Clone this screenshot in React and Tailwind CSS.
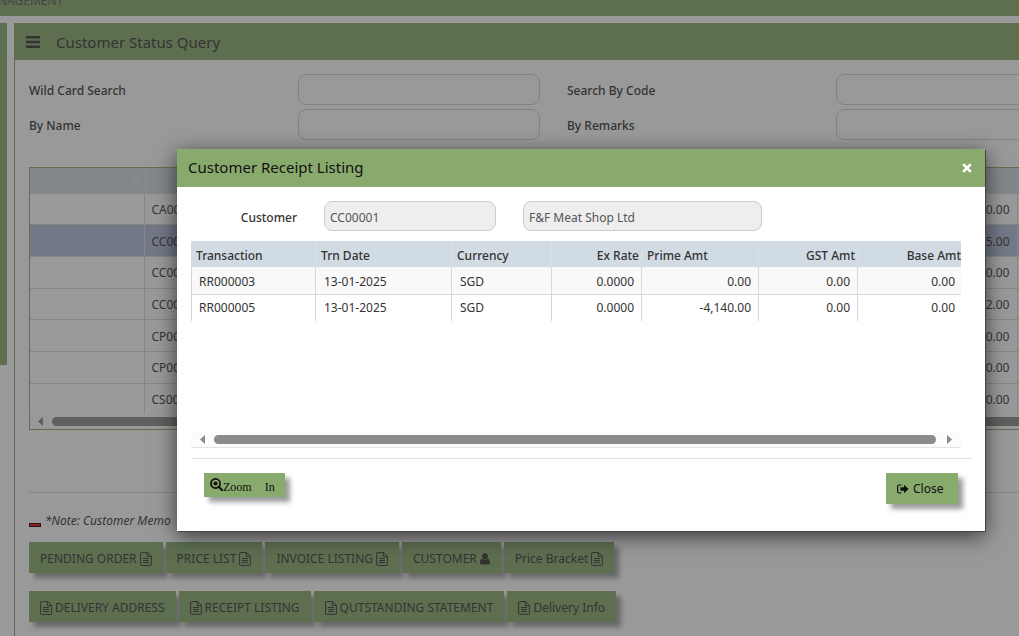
const customers = [
  ["CA00001", "0.00"],
  ["CC00001", "895.00"],
  ["CC00002", "80.00"],
  ["CC00003", "12.00"],
  ["CP00001", "30.00"],
  ["CP00002", "30.00"],
  ["CS00001", "30.00"],
];

const receiptColumns = [
  { title: "Transaction", head: "pl-[5px] text-left", cell: "pl-[7px] text-left" },
  { title: "Trn Date", head: "pl-[5px] text-left", cell: "pl-2 text-left" },
  { title: "Currency", head: "pl-[5px] text-left", cell: "pl-2 text-left" },
  { title: "Ex Rate", head: "pr-[2px] text-right", cell: "pr-[7px] text-right" },
  { title: "Prime Amt", head: "pl-[5px] text-left", cell: "pr-[7px] text-right" },
  { title: "GST Amt", head: "pr-[2px] text-right", cell: "pr-[7px] text-right" },
  { title: "Base Amt", head: "text-right", cell: "pr-[6px] text-right" },
];

const receipts = [
  ["RR000003", "13-01-2025", "SGD", "0.0000", "0.00", "0.00", "0.00"],
  ["RR000005", "13-01-2025", "SGD", "0.0000", "-4,140.00", "0.00", "0.00"],
];

const searchFields = [
  ["wild", "Wild Card Search"],
  ["code", "Search By Code"],
  ["name", "By Name"],
  ["remarks", "By Remarks"],
];

function MenuIcon() {
  return (
    <svg viewBox="0 0 14 12" className="h-3 w-[14px]" fill="currentColor">
      <path d="M0 0h14v2.500H0zM0 4.750h14v2.500H0zM0 9.500h14V12H0z" />
    </svg>
  );
}

function FileIcon() {
  return (
    <svg viewBox="0 0 12 14" className="h-[14px] w-3 shrink-0" fill="none" stroke="currentColor">
      <path d="M1.2.6h6.5l3.7 3.7v8.5q0 .6-.6.6H1.2q-.6 0-.6-.6V1.200q0-.6.6-.6zM7.400.6v4h4M3 6.500h6M3 8.500h6M3 10.500h6" />
    </svg>
  );
}

function UserIcon() {
  return (
    <svg viewBox="0 0 10 12" className="h-3 w-[10px] shrink-0" fill="currentColor">
      <circle cx="5" cy="3.200" r="2.900" />
      <path d="M2.200 5.400C.6 5.800 0 7.600 0 9.400 0 10.900.8 11.600 2 11.600h6c1.200 0 2-.7 2-2.200 0-1.800-.6-3.600-2.200-4C7 6.300 6 6.600 5 6.600s-2-.3-2.800-1.200z" />
    </svg>
  );
}

function SignOutIcon() {
  return (
    <svg viewBox="0 0 12 10" className="h-[10px] w-3 shrink-0">
      <path d="M4.500 1H2.200Q.6 1 .6 2.500v5Q.6 9 2.200 9h2.300" fill="none" stroke="currentColor" strokeWidth="1.200" />
      <path d="M3.500 3.200H7V.8L11.600 5 7 9.200V6.800H3.500z" fill="currentColor" />
    </svg>
  );
}

function ZoomIcon() {
  return (
    <svg viewBox="0 0 13 13" className="size-[13px] shrink-0">
      <circle cx="5.500" cy="5.500" r="4.600" fill="none" stroke="currentColor" strokeWidth="1.700" />
      <circle cx="5.500" cy="5.500" r="2.100" fill="currentColor" />
      <path d="M8.800 8.800l3.400 3.400" stroke="currentColor" strokeWidth="2.200" strokeLinecap="round" />
    </svg>
  );
}

function Arrow({ right }) {
  return (
    <svg viewBox="0 0 5 9" className="h-[9px] w-[5px] shrink-0 fill-[#8b8b8b]">
      <path d={right ? "M0 0v9l5-4.500z" : "M5 0v9L0 4.500z"} />
    </svg>
  );
}

function ActionButton({ children }) {
  return (
    <button
      type="button"
      className="flex h-[31px] items-center gap-[3px] whitespace-nowrap bg-[#88aa6d] px-[11px] pt-[2px] text-[12px] shadow-[5px_5px_5px_rgba(0,0,0,0.4)]"
    >
      {children}
    </button>
  );
}

function StatusPage() {
  return (
    <div className="flex min-h-screen flex-col gap-[7px] overflow-hidden">
      <header className="flex h-4 items-end overflow-hidden bg-[#88aa6d] text-[12px] text-[#555]">
        <span className="-ml-[2px] mb-[7px] leading-4">NAGEMENT</span>
      </header>
      <div className="flex grow gap-[7px]">
        <aside className="h-[342px] w-[7px] shrink-0 bg-[#88aa6d]" />
        <main className="min-w-0 grow border-l border-[#88aa6d]">
          <div className="flex h-[37px] items-center gap-4 bg-[#88aa6d] pl-[11px] pt-px">
            <MenuIcon />
            <h1 className="text-[15px]">Customer Status Query</h1>
          </div>
          <div className="pl-[14px] pt-[14px]">
            <form className="grid w-[calc(100%+86px)] grid-cols-2 gap-y-1">
              {searchFields.map(([id, label]) => (
                <div key={id} className="grid grid-cols-[269px_1fr] items-center pr-[27px]">
                  <label htmlFor={id} className="pt-[2px] text-[12px] font-medium">{label}</label>
                  <input id={id} className="h-[31px] w-full rounded-lg border border-[#d0d0d0] px-2 text-[12px]" />
                </div>
              ))}
            </form>
            <div className="mt-[27px] border-y border-l border-[#88aa6d]">
              <table className="h-[246px] w-full table-fixed border-collapse text-[12px]">
                <colgroup>
                  <col className="w-[114px]" />
                  <col className="w-[115px]" />
                  <col />
                  <col className="w-[2px]" />
                </colgroup>
                <thead>
                  <tr className="h-[26px] bg-[#d1dbe4]">
                    <th className="border-r border-[#dcdcdc]">
                      <svg viewBox="0 0 6 11" className="ml-auto mr-[5px] h-[11px] w-[6px] fill-[#dfdfe2]">
                        <path d="M3 0l3 5H0zM3 11L0 6h6z" />
                      </svg>
                    </th>
                    <th />
                    <th />
                    <th />
                  </tr>
                </thead>
                <tbody>
                  {customers.map(([code, amount], i) => (
                    <tr key={code} className={`border-b border-[#d8d8d8] last:border-b-0 ${i === 1 ? "bg-[#b0bdd8]" : ""}`}>
                      <td className="border-r border-[#d8d8d8]" />
                      <td className="pl-[7px] pt-[2px]">{code}</td>
                      <td className="border-r border-[#d8d8d8] pr-[7px] pt-[2px] text-right">{amount}</td>
                      <td />
                    </tr>
                  ))}
                </tbody>
              </table>
              <div className="flex h-[15px] items-center gap-[9px] bg-[#fcfcfc] pl-2">
                <Arrow />
                <div className="h-[9px] grow rounded-l-full bg-[#8b8b8b]" />
              </div>
            </div>
            <div className="mt-[62px] border-t border-[#d8d8d8]" />
            <p className="mt-[18px] flex items-center gap-1 text-[12px] italic leading-5">
              <span className="mt-2 h-1 w-3 border border-black bg-[#ff0000]" />
              *Note: Customer Memo
            </p>
            <div className="mt-[11px] flex gap-[3px]">
              <ActionButton>PENDING ORDER <FileIcon /></ActionButton>
              <ActionButton>PRICE LIST <FileIcon /></ActionButton>
              <ActionButton>INVOICE LISTING <FileIcon /></ActionButton>
              <ActionButton>CUSTOMER <UserIcon /></ActionButton>
              <ActionButton>Price Bracket <FileIcon /></ActionButton>
            </div>
            <div className="mt-[18px] flex gap-[3px]">
              <ActionButton><FileIcon /> DELIVERY ADDRESS</ActionButton>
              <ActionButton><FileIcon /> RECEIPT LISTING</ActionButton>
              <ActionButton><FileIcon /> QUTSTANDING STATEMENT</ActionButton>
              <ActionButton><FileIcon /> Delivery Info</ActionButton>
            </div>
          </div>
        </main>
      </div>
    </div>
  );
}

function ReceiptDialog() {
  return (
    <section
      role="dialog"
      aria-labelledby="receipt-title"
      className="absolute left-[177px] right-[34px] top-[149px] bg-white pb-[27px] shadow-[1px_1px_0_#444,0_5px_20px_rgba(0,0,0,0.65)]"
    >
      <div className="flex h-[38px] items-center justify-between bg-[#88aa6d] pl-[11px] pr-[13px] text-[#111]">
        <h2 id="receipt-title" className="pb-[2px] text-[15px]">Customer Receipt Listing</h2>
        <button type="button" aria-label="Dismiss" className="text-white">
          <svg viewBox="0 0 10 10" className="size-[10px]" stroke="currentColor" strokeWidth="2.600">
            <path d="M1.200 1.200l7.600 7.600M8.800 1.200L1.200 8.800" />
          </svg>
        </button>
      </div>
      <div className="flex items-center pl-[14px] pt-[14px] text-[12px]">
        <label htmlFor="customer-code" className="w-[106px] pt-[3px] text-right text-[12px] font-medium">Customer</label>
        <input
          id="customer-code"
          readOnly
          defaultValue="CC00001"
          className="ml-[27px] h-[30px] w-[172px] rounded-lg border border-[#ccc] bg-[#eee] px-[5px] pt-[2px] text-[#555]"
        />
        <input
          aria-label="Customer name"
          readOnly
          defaultValue="F&F Meat Shop Ltd"
          className="ml-[27px] h-[30px] w-[239px] rounded-lg border border-[#ccc] bg-[#eee] px-[5px] pt-[2px] text-[#555]"
        />
      </div>
      <div className="ml-[14px] mr-6 mt-[10px] border-b border-[#e4e4e4]">
        <div className="h-[191px]">
          <table className="w-full table-fixed border-separate border-spacing-0 text-[12px] leading-4">
            <colgroup>
              <col className="w-[125px]" />
              <col className="w-[136px]" />
              <col className="w-[100px]" />
              <col className="w-[90px]" />
              <col className="w-[117px]" />
              <col className="w-[99px]" />
              <col />
            </colgroup>
            <thead>
              <tr className="h-[26px] bg-[#d1dbe4]">
                {receiptColumns.map((c) => (
                  <th key={c.title} className={`whitespace-nowrap border-r border-[#dcdfe2] pt-1 font-medium last:border-r-0 ${c.head}`}>
                    {c.title}
                  </th>
                ))}
              </tr>
            </thead>
            <tbody>
              {receipts.map((row, r) => (
                <tr key={row[0]} className={r === 0 ? "h-[28px] bg-[#f9f9f9]" : "h-[26px]"}>
                  {row.map((value, i) => (
                    <td
                      key={receiptColumns[i].title}
                      className={`border-r border-[#d8d8d8] first:border-l last:border-r-0 ${r === 0 ? "border-b pt-[2px]" : ""} ${receiptColumns[i].cell}`}
                    >
                      {value}
                    </td>
                  ))}
                </tr>
              ))}
            </tbody>
          </table>
        </div>
        <div className="flex h-[15px] items-center bg-[#fcfcfc] px-[9px]">
          <Arrow />
          <div className="ml-[9px] mr-[11px] h-[9px] grow rounded-full bg-[#8b8b8b]" />
          <Arrow right />
        </div>
      </div>
      <div className="ml-[14px] mr-[13px] mt-[10px] border-t border-[#e0e0e0]" />
      <div className="mt-[14px] flex items-start justify-between pl-[27px] pr-[27px] text-[#111]">
        <button
          type="button"
          className="flex h-6 w-[81px] items-start bg-[#88aa6d] pl-[6px] pt-[5px] font-['Liberation_Serif',serif] text-[12px] leading-4 shadow-[5px_5px_5px_rgba(0,0,0,0.4)]"
        >
          <ZoomIcon />
          <span className="pt-px">Zoom</span>
          <span className="ml-[13px] pt-px">In</span>
        </button>
        <button
          type="button"
          className="flex h-[31px] w-[72px] items-center gap-1 bg-[#88aa6d] pl-[11px] text-[12px] shadow-[5px_5px_5px_rgba(0,0,0,0.4)]"
        >
          <SignOutIcon />
          Close
        </button>
      </div>
    </section>
  );
}

export default function App() {
  return (
    <div className="relative h-screen overflow-hidden bg-white font-['Noto_Sans',sans-serif] text-[#333]">
      <StatusPage />
      <div className="absolute inset-0 bg-[#333]/50" />
      <ReceiptDialog />
    </div>
  );
}
